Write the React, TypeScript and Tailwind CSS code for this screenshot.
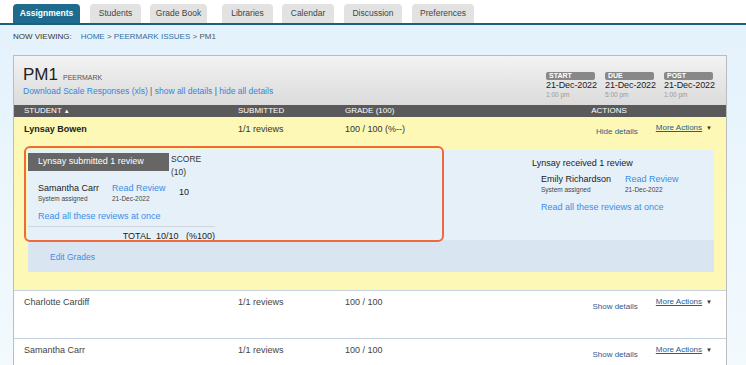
const tabs = [
  { label: "Assignments", w: "w-[67px]", ml: "ml-0", active: true },
  { label: "Students", w: "w-[51px]", ml: "ml-[10px]" },
  { label: "Grade Book", w: "w-[57px]", ml: "ml-[9px]" },
  { label: "Libraries", w: "w-[51px]", ml: "ml-[15px]" },
  { label: "Calendar", w: "w-[52px]", ml: "ml-[9px]" },
  { label: "Discussion", w: "w-[58px]", ml: "ml-[10px]" },
  { label: "Preferences", w: "w-[62px]", ml: "ml-[10px]" },
];

const dates = [
  { label: "START", date: "21-Dec-2022", time: "1:00 pm" },
  { label: "DUE", date: "21-Dec-2022", time: "5:00 pm" },
  { label: "POST", date: "21-Dec-2022", time: "1:00 pm" },
];

function Actions({ toggle, pt }: { toggle: string; pt: string }) {
  return (
    <div className="ml-auto flex items-start pr-[14px]">
      <span className={`${pt} text-[8px] text-[#2c5d8c]`}>{toggle}</span>
      <span className="ml-[18px] pt-[5px] text-[8px] text-[#2a5a90] underline">
        More Actions
      </span>
      <span className="ml-[4px] pt-[8px] text-[6px] leading-[6px] text-[#333]">▼</span>
    </div>
  );
}

function StudentRow({ name }: { name: string }) {
  return (
    <div className="flex h-[48px] border-t border-[#c5d3e0] bg-white pl-[10px] text-[9px] text-[#444]">
      <div className="w-[214px] pt-[5px]">{name}</div>
      <div className="w-[107px] pt-[5px]">1/1 reviews</div>
      <div className="pt-[5px]">100 / 100</div>
      <Actions toggle="Show details" pt="pt-[10px]" />
    </div>
  );
}

export default function App() {
  return (
    <div className="min-h-screen bg-white font-['Liberation_Sans',Arial,sans-serif] text-[#333]">
      {/* TABS */}
      <div className="flex h-[25px] items-end border-b-2 border-[#1d5f82] pl-[13px]">
        {tabs.map((t) => (
          <div
            key={t.label}
            className={`${t.w} ${t.ml} flex h-[19px] items-center justify-center rounded-t-[4px] text-[8.5px] ${
              t.active ? "bg-[#1f6b8e] font-bold text-white" : "bg-[#e2e2e2] text-[#444]"
            }`}
          >
            {t.label}
          </div>
        ))}
      </div>

      <div className="bg-gradient-to-b from-[#e4f2fc] to-[#f6fbfe] pb-[40px]">
        {/* BREADCRUMB */}
        <div className="h-[30px] pl-[13px] pt-[7px] text-[8px] leading-[10px]">
          <span className="text-[#333]">NOW VIEWING:</span>
          <span className="ml-[9px] text-[#2f6fa8]">HOME</span>
          <span className="text-[#555]"> &gt; </span>
          <span className="text-[#2f6fa8]">PEERMARK ISSUES</span>
          <span className="text-[#555]"> &gt; PM1</span>
        </div>

        {/* PANEL */}
        <div className="ml-[13px] w-[714px] border border-[#bcbcbc] bg-white">
          {/* header */}
          <div className="flex h-[49px] justify-between bg-gradient-to-b from-[#f3f3f3] to-[#dbdbdb] pl-[9px] pr-[13px]">
            <div className="pt-[9px]">
              <div className="flex items-baseline">
                <span className="text-[17px] leading-[20px] text-[#222]">PM1</span>
                <span className="ml-[5px] text-[7px] uppercase text-[#555]">Peermark</span>
              </div>
              <div className="mt-[1px] text-[8.5px] leading-[11px] text-[#2f86e0]">
                Download Scale Responses (xls) <span className="text-[#555]">|</span> show all details{" "}
                <span className="text-[#555]">|</span> hide all details
              </div>
            </div>
            <div className="flex gap-[10px] pt-[16px]">
              {dates.map((d) => (
                <div key={d.label} className="w-[49px] whitespace-nowrap">
                  <div className="h-[8px] rounded-[2px] bg-[#888] pl-[3px] text-[7px] font-bold leading-[8px] text-white">
                    {d.label}
                  </div>
                  <div className="text-[9px] leading-[11px] tracking-[-0.1px] text-[#222]">{d.date}</div>
                  <div className="text-[6.5px] leading-[8px] text-[#999]">{d.time}</div>
                </div>
              ))}
            </div>
          </div>

          {/* column headings */}
          <div className="flex h-[12px] items-center bg-[#5a5a5a] pl-[10px] text-[8px] uppercase text-white">
            <div className="w-[214px]">
              Student <span className="text-[6px]">▲</span>
            </div>
            <div className="w-[107px]">Submitted</div>
            <div>Grade (100)</div>
            <div className="ml-auto w-[100px] text-center">Actions</div>
            <div className="w-[67px]" />
          </div>

          {/* expanded row */}
          <div className="bg-[#fdf8b5] pb-[18px]">
            <div className="flex h-[24px] pl-[10px] text-[9px] text-[#333]">
              <div className="w-[214px] pt-[6px] font-bold text-[#222]">Lynsay Bowen</div>
              <div className="w-[107px] pt-[6px]">1/1 reviews</div>
              <div className="pt-[6px]">100 / 100 (%--)</div>
              <Actions toggle="Hide details" pt="pt-[9px]" />
            </div>

            <div className="relative ml-[14px] mr-[12px] mt-[9px]">
              <div className="flex h-[90px] bg-[#e6f0f9]">
                {/* submitted reviews */}
                <div className="w-[187px] pt-[3px]">
                  <div className="flex">
                    <div className="flex h-[18px] w-[141px] items-center bg-[#666] pl-[10px] text-[9px] text-white">
                      Lynsay submitted 1 review
                    </div>
                    <div className="pl-[2px] text-[8.5px] leading-[13px] text-[#333]">
                      SCORE
                      <br />
                      (10)
                    </div>
                  </div>
                  <div className="mt-[3px] flex">
                    <div className="w-[84px] pl-[10px]">
                      <div className="text-[9px] leading-[12px] text-[#222]">Samantha Carr</div>
                      <div className="text-[6.5px] leading-[10px] text-[#444]">System assigned</div>
                    </div>
                    <div className="w-[59px]">
                      <div className="text-[9px] leading-[12px] text-[#3b8ee8]">Read Review</div>
                      <div className="text-[6.5px] leading-[10px] text-[#444]">21-Dec-2022</div>
                    </div>
                    <div className="flex items-center pl-[8px] text-[9px] text-[#222]">10</div>
                  </div>
                  <div className="mt-[6px] pl-[10px] text-[9px] leading-[12px] text-[#3b8ee8]">
                    Read all these reviews at once
                  </div>
                  <div className="mt-[4px] border-t border-[#cfd6dd] pt-[3px] text-right text-[9px] leading-[12px] text-[#222]">
                    TOTAL&nbsp;&nbsp;10/10&nbsp;&nbsp;&nbsp;(%100)
                  </div>
                </div>

                {/* received reviews */}
                <div className="ml-[317px] pt-[8px]">
                  <div className="text-[9px] leading-[11px] text-[#222]">Lynsay received 1 review</div>
                  <div className="mt-[4px] flex pl-[9px]">
                    <div className="w-[84px]">
                      <div className="text-[9px] leading-[12px] text-[#222]">Emily Richardson</div>
                      <div className="text-[6.5px] leading-[10px] text-[#444]">System assigned</div>
                    </div>
                    <div>
                      <div className="text-[9px] leading-[12px] text-[#3b8ee8]">Read Review</div>
                      <div className="text-[6.5px] leading-[10px] text-[#444]">21-Dec-2022</div>
                    </div>
                  </div>
                  <div className="mt-[6px] pl-[9px] text-[9px] leading-[12px] text-[#3b8ee8]">
                    Read all these reviews at once
                  </div>
                </div>
              </div>
              <div className="flex h-[32px] items-center bg-[#d9e6f1] pl-[22px] pt-[2px] text-[8.5px] text-[#3b8ee8]">
                Edit Grades
              </div>

              {/* highlight */}
              <div className="absolute left-[-4px] top-[-4px] h-[96px] w-[420px] rounded-[6px] border-2 border-[#f0693c]" />
            </div>
          </div>

          <StudentRow name="Charlotte Cardiff" />
          <StudentRow name="Samantha Carr" />
        </div>
      </div>
    </div>
  );
}
